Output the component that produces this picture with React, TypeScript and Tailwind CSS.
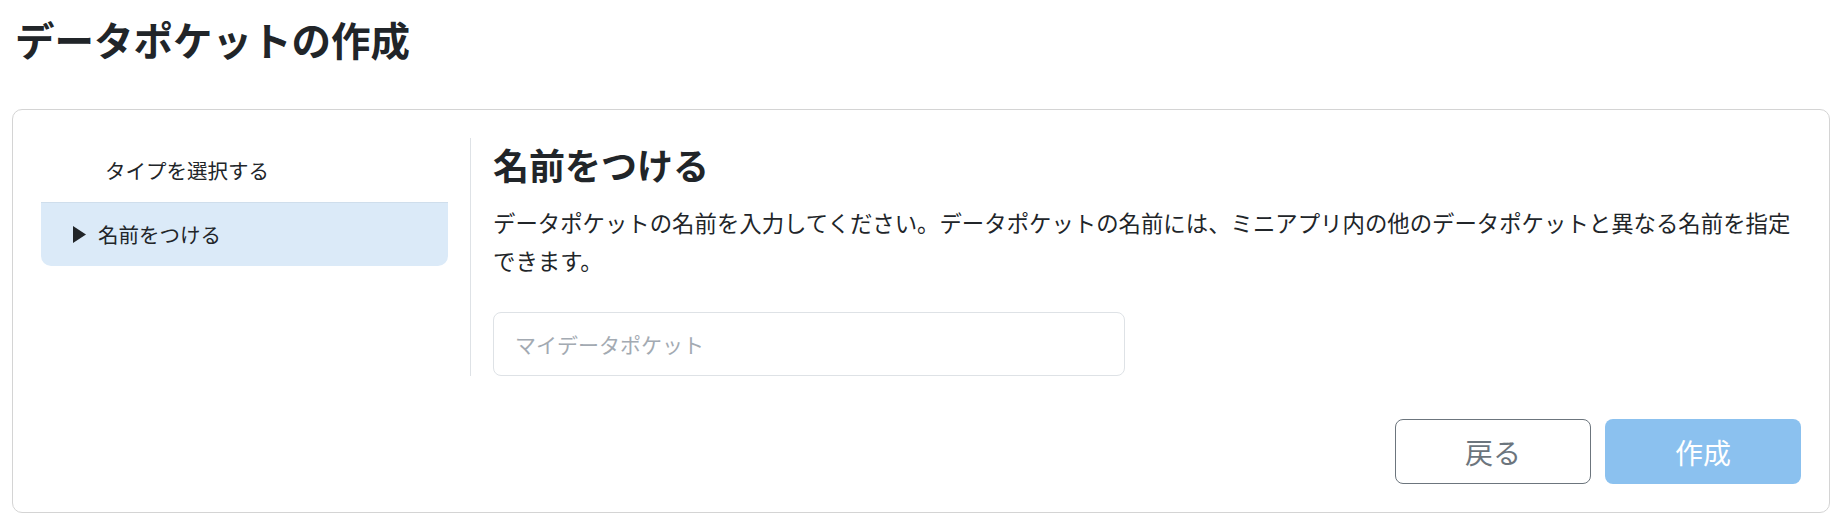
import React, { useState } from 'react';

const FONT = "font-['Noto_Sans_CJK_JP','Noto_Sans',sans-serif]";

const App: React.FC = () => {
  const [name, setName] = useState('');

  return (
    <div className={`min-h-[525px] w-full bg-white text-[#212529] ${FONT}`}>
      {/* ページタイトル */}
      <div className="px-[15px] pt-[15px] pb-[47px]">
        <h1 className="text-[39.5px] font-bold leading-[47px]">データポケットの作成</h1>
      </div>

      {/* カード */}
      <div className="ml-[12px] mr-[18px] rounded-[10px] border border-[#d4d4d4] p-[28px]">
        <div className="flex">
          {/* ステップ一覧 */}
          <div className="w-[407px] shrink-0">
            <div className="flex h-[64px] items-center pl-[64px] text-[20.5px]">タイプを選択する</div>
            <div className="flex h-[64px] items-center gap-[12px] rounded-b-[10px] border-t border-[#cfdeec] bg-[#dbeaf8] pl-[32px] text-[20.5px]">
              <svg width="13" height="17" viewBox="0 0 13 17" className="shrink-0">
                <path d="M0 0 L13 8.5 L0 17 Z" fill="#212529" />
              </svg>
              <span>名前をつける</span>
            </div>
          </div>

          {/* 入力欄 */}
          <div className="ml-[22px] flex-1 border-l border-[#dee2e6] pl-[22px]">
            <h2 className="text-[36px] font-bold leading-[53px]">名前をつける</h2>
            <p className="mt-[12px] text-[22.4px] leading-[38px]">
              データポケットの名前を入力してください。データポケットの名前には、ミニアプリ内の他のデータポケットと異なる名前を指定できます。
            </p>
            <input
              type="text"
              value={name}
              onChange={(e) => setName(e.target.value)}
              placeholder="マイデータポケット"
              className="mt-[33px] block h-[64px] w-[632px] rounded-[8px] border border-[#dee2e6] px-[21px] text-[21px] outline-none placeholder:text-[#a3aab2]"
            />
          </div>
        </div>

        {/* ボタン */}
        <div className="mt-[43px] flex justify-end gap-[14px]">
          <button className="h-[65px] w-[196px] rounded-[8px] border border-[#6c757d] text-[28px] text-[#6c757d]">
            戻る
          </button>
          <button disabled className="h-[65px] w-[196px] rounded-[8px] bg-[#8bc1ef] text-[28px] text-white">
            作成
          </button>
        </div>
      </div>
    </div>
  );
};

export default App;
